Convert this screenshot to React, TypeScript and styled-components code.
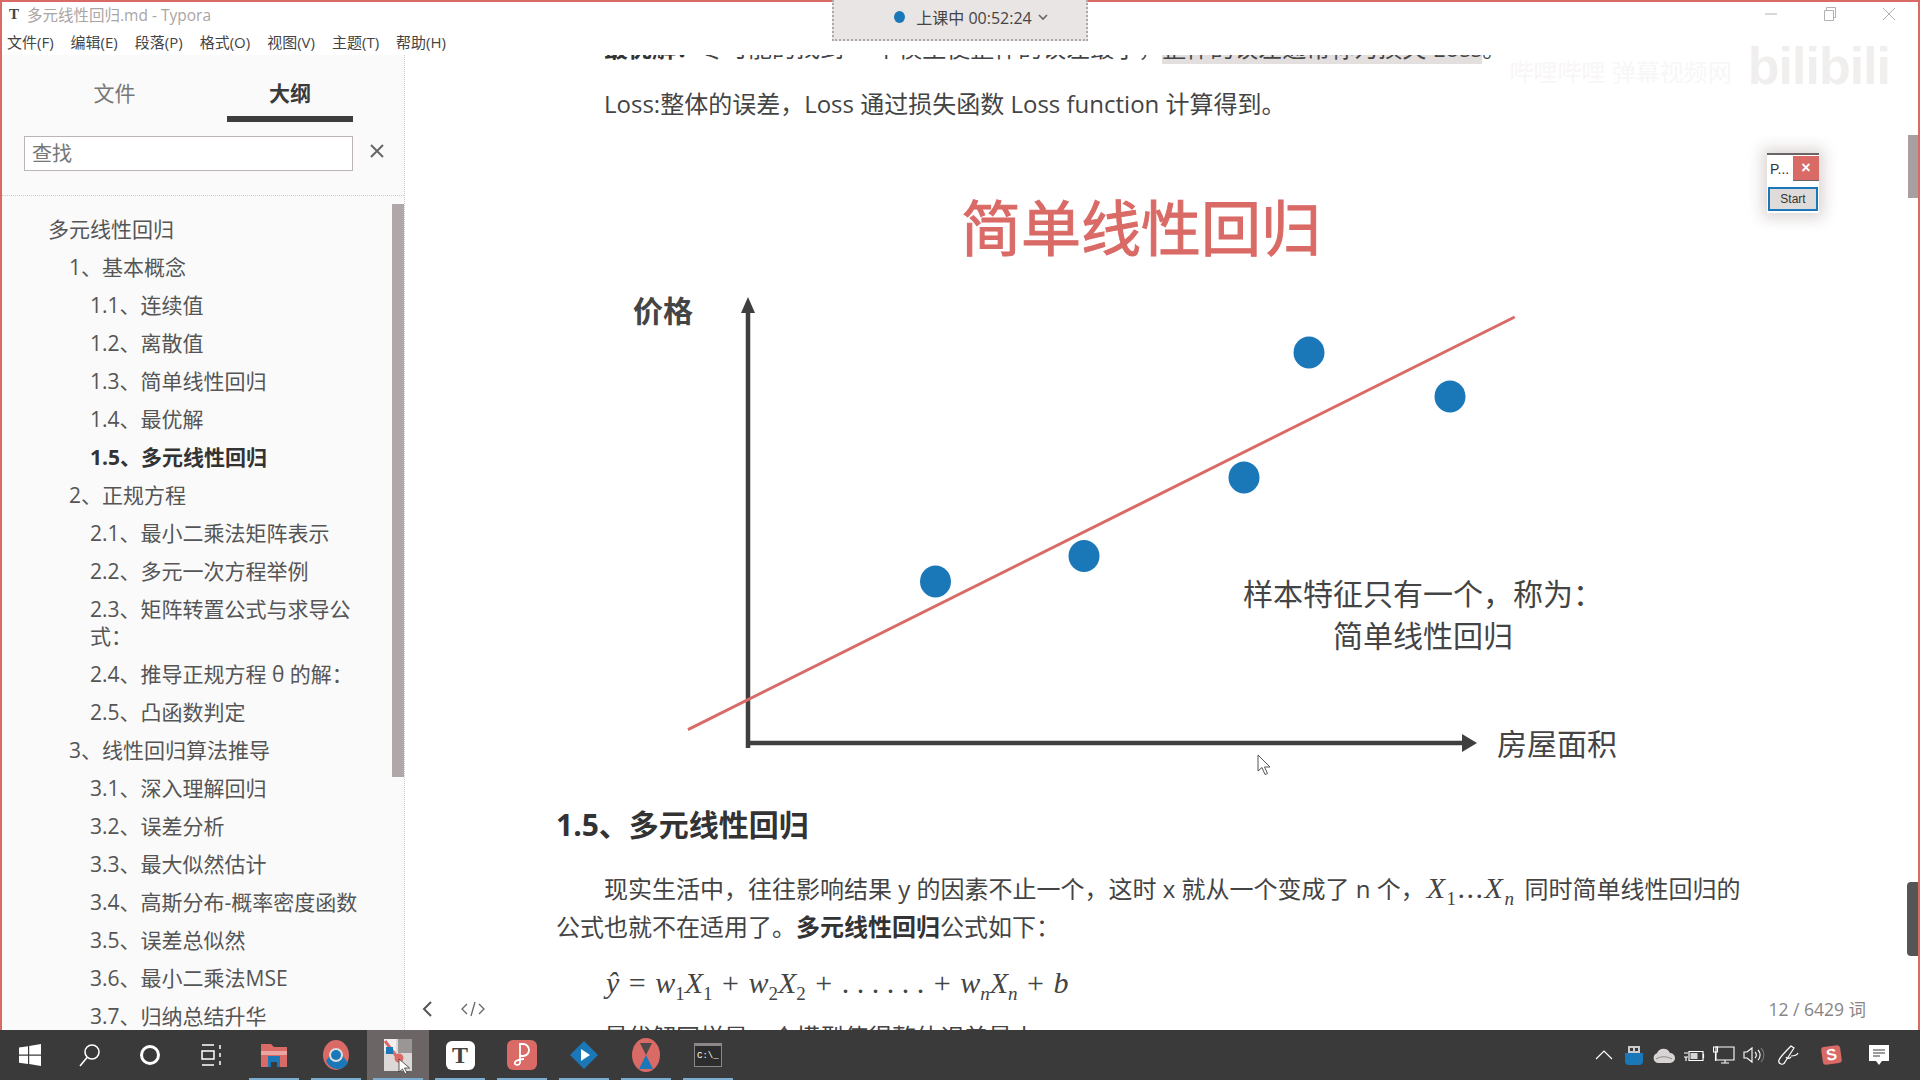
import styled, { createGlobalStyle } from 'styled-components';

const UI_FONT = '"Open Sans", "Noto Sans CJK SC", sans-serif';
const CJK_FONT = '"Noto Sans CJK SC", "Open Sans", sans-serif';
const RED = '#d96a66';
const BLUE = '#1a78b8';

const GlobalStyle = createGlobalStyle`
  html, body {
    margin: 0;
    padding: 0;
    width: 1920px;
    height: 1080px;
    overflow: hidden;
    background: #fff;
  }
  * { box-sizing: border-box; }
`;

const outline = [
  { level: 1, text: '多元线性回归' },
  { level: 2, text: '1、基本概念' },
  { level: 3, text: '1.1、连续值' },
  { level: 3, text: '1.2、离散值' },
  { level: 3, text: '1.3、简单线性回归' },
  { level: 3, text: '1.4、最优解' },
  { level: 3, text: '1.5、多元线性回归', active: true },
  { level: 2, text: '2、正规方程' },
  { level: 3, text: '2.1、最小二乘法矩阵表示' },
  { level: 3, text: '2.2、多元一次方程举例' },
  { level: 3, text: '2.3、矩阵转置公式与求导公式：' },
  { level: 3, text: '2.4、推导正规方程 θ 的解：' },
  { level: 3, text: '2.5、凸函数判定' },
  { level: 2, text: '3、线性回归算法推导' },
  { level: 3, text: '3.1、深入理解回归' },
  { level: 3, text: '3.2、误差分析' },
  { level: 3, text: '3.3、最大似然估计' },
  { level: 3, text: '3.4、高斯分布-概率密度函数' },
  { level: 3, text: '3.5、误差总似然' },
  { level: 3, text: '3.6、最小二乘法MSE' },
  { level: 3, text: '3.7、归纳总结升华' },
];

const menus = ['文件(F)', '编辑(E)', '段落(P)', '格式(O)', '视图(V)', '主题(T)', '帮助(H)'];

const dots = [
  [935.5, 580.5],
  [1084, 555],
  [1244, 476.5],
  [1309, 351.5],
  [1450, 395.5],
];

function App() {
  return (
    <>
      <GlobalStyle />
      <Screen>
        <Window>
          <TitleBar>
            <AppGlyph>T</AppGlyph>
            <TitleText>多元线性回归.md - Typora</TitleText>
            <WindowButtons>
              <WindowButton>
                <svg width="14" height="14" viewBox="0 0 14 14">
                  <path d="M1 7h12" stroke="#b5b0b0" strokeWidth="1" />
                </svg>
              </WindowButton>
              <WindowButton>
                <svg width="14" height="14" viewBox="0 0 14 14" fill="none" stroke="#b5b0b0">
                  <path d="M1.5 3.5h9v10h-9zM3.5 3.5v-3h9v10h-2" />
                </svg>
              </WindowButton>
              <WindowButton>
                <svg width="14" height="14" viewBox="0 0 14 14">
                  <path d="M1 1l12 12M13 1L1 13" stroke="#b5b0b0" strokeWidth="1" />
                </svg>
              </WindowButton>
            </WindowButtons>
          </TitleBar>

          <MenuBar>
            {menus.map((m) => (
              <MenuItem key={m}>{m}</MenuItem>
            ))}
          </MenuBar>

          <Body>
            <Sidebar>
              <Tabs>
                <Tab>文件</Tab>
                <Tab $active>大纲</Tab>
              </Tabs>
              <SearchRow>
                <SearchBox>查找</SearchBox>
                <svg width="16" height="16" viewBox="0 0 16 16">
                  <path d="M2 2l12 12M14 2L2 14" stroke="#666" strokeWidth="2" />
                </svg>
              </SearchRow>
              <OutlineWrap>
                <OutlineList>
                  {outline.map((o) => (
                    <OutlineRow key={o.text} $level={o.level} $active={o.active}>
                      {o.text}
                    </OutlineRow>
                  ))}
                </OutlineList>
                <SideScrollThumb />
              </OutlineWrap>
            </Sidebar>

            <Editor>
              <Doc>
                <CutLine>
                  <b>最优解：</b>尽可能的找到 一个模型使整体的误差最小，
                  <Mark>整体的误差通常称为损失 Loss</Mark>。
                </CutLine>
                <Para>Loss:整体的误差，Loss 通过损失函数 Loss function 计算得到。</Para>

                <ChartSvg viewBox="620 170 1040 600" width="1040" height="600">
                  <text
                    x="1141"
                    y="250"
                    textAnchor="middle"
                    fontSize="60"
                    fill={RED}
                    stroke={RED}
                    strokeWidth="1"
                    fontFamily={CJK_FONT}
                  >
                    简单线性回归
                  </text>
                  <text x="633" y="321" fontSize="30" fontWeight="700" fill="#444" fontFamily={CJK_FONT}>
                    价格
                  </text>
                  <path d="M748 747V306" stroke="#3f3f3f" strokeWidth="4.5" fill="none" />
                  <path d="M741 312l7-16 7 16z" fill="#3f3f3f" />
                  <path d="M746 742H1464" stroke="#3f3f3f" strokeWidth="4.5" fill="none" />
                  <path d="M1462 733l15 9-15 9z" fill="#3f3f3f" />
                  <path d="M688 728.6L1514.7 316" stroke={RED} strokeWidth="3" fill="none" />
                  {dots.map(([x, y]) => (
                    <ellipse key={x} cx={x} cy={y} rx="15.5" ry="16" fill={BLUE} />
                  ))}
                  <text x="1243" y="604" fontSize="30" fill="#444" fontFamily={CJK_FONT}>
                    样本特征只有一个，称为：
                  </text>
                  <text x="1333" y="646" fontSize="30" fill="#444" fontFamily={CJK_FONT}>
                    简单线性回归
                  </text>
                  <text x="1497" y="754" fontSize="30" fill="#444" fontFamily={CJK_FONT}>
                    房屋面积
                  </text>
                </ChartSvg>

                <Heading>1.5、多元线性回归</Heading>
                <Para>
                  现实生活中，往往影响结果 y 的因素不止一个，这时 x 就从一个变成了 n 个，
                  <MathInline>
                    X<Sub>1</Sub>
                    <Plain>...</Plain>X<Sub $variable>n</Sub>
                  </MathInline>{' '}
                  同时简单线性回归的公式也就不在适用了。<b>多元线性回归</b>公式如下：
                </Para>
                <Formula>
                  ŷ <Op>=</Op> w<Sub>1</Sub>X<Sub>1</Sub> <Op>+</Op> w<Sub>2</Sub>X<Sub>2</Sub> <Op>+</Op>{' '}
                  <Plain>. . . . . .</Plain> <Op>+</Op> w<Sub $variable>n</Sub>X<Sub $variable>n</Sub> <Op>+</Op> b
                </Formula>
                <Para>最优解同样是一个模型使得整体误差最小</Para>
              </Doc>

              <FooterLeft>
                <svg width="12" height="18" viewBox="0 0 12 18" fill="none" stroke="#555" strokeWidth="2">
                  <path d="M10 2L3 9l7 7" />
                </svg>
                <svg width="24" height="16" viewBox="0 0 24 16" fill="none" stroke="#666" strokeWidth="1.3">
                  <path d="M6 3L1 8l5 5M18 3l5 5-5 5M14 1l-4 14" />
                </svg>
              </FooterLeft>
              <WordCount>12 / 6429 词</WordCount>
            </Editor>
          </Body>

          <RecordPill>
            <RecordDot />
            上课中 00:52:24
            <svg width="10" height="8" viewBox="0 0 10 8" fill="none" stroke="#666" strokeWidth="1.6">
              <path d="M1 2l4 4 4-4" />
            </svg>
          </RecordPill>

          <Watermark>
            <WatermarkNote>哔哩哔哩 弹幕视频网</WatermarkNote>
            <WatermarkLogo>bilibili</WatermarkLogo>
          </Watermark>

          <MiniPanel>
            <MiniHead>
              <MiniTitle>P...</MiniTitle>
              <MiniClose>×</MiniClose>
            </MiniHead>
            <MiniStart>Start</MiniStart>
          </MiniPanel>

          <EdgeThumb />
          <EdgeWidget />
          <PageCursor width="16" height="22" viewBox="0 0 16 22">
            <path d="M1 1v16l4-3.5 3 7 2.5-1-3-6.5H13z" fill="#fff" stroke="#555" strokeWidth="1" />
          </PageCursor>
        </Window>

        <Taskbar>
          <TaskSlot $w={60}>
            <svg width="22" height="22" viewBox="0 0 22 22" fill="#fff">
              <path d="M0 3.5l9-1.3v8.3H0zM10.2 2L22 0v10.5H10.2zM0 11.7h9V20L0 18.7zM10.2 11.7H22V22l-11.8-2z" />
            </svg>
          </TaskSlot>
          <TaskSlot $w={60}>
            <svg width="22" height="24" viewBox="0 0 22 24" fill="none" stroke="#fff" strokeWidth="1.6">
              <circle cx="13" cy="9" r="7" />
              <path d="M8 14.5L1 23" />
            </svg>
          </TaskSlot>
          <TaskSlot $w={60}>
            <svg width="22" height="22" viewBox="0 0 22 22" fill="none" stroke="#fff" strokeWidth="3">
              <circle cx="11" cy="11" r="8.5" />
            </svg>
          </TaskSlot>
          <TaskSlot $w={63}>
            <svg width="22" height="22" viewBox="0 0 22 22" fill="none" stroke="#fff" strokeWidth="1.5">
              <path d="M1 1h12M1 21h12M1 7h12v8H1zM19 1v4M19 9v4M19 17v4" />
            </svg>
          </TaskSlot>

          <TaskApp $open>
            <svg width="28" height="28" viewBox="0 0 28 28">
              <path d="M1 3h10l3 3h13v20H1z" fill={RED} />
              <path d="M1 10h26v4H1z" fill="#e8a5a2" />
              <path d="M8 15h12v11H8z" fill={BLUE} />
              <path d="M11 21h6v5h-6z" fill="#3a3a3a" />
            </svg>
          </TaskApp>
          <TaskApp $open>
            <svg width="28" height="32" viewBox="0 0 28 32">
              <ellipse cx="14" cy="16" rx="13" ry="15" fill={RED} />
              <path d="M4 22a13 15 0 0 0 22 2l-6-8H8z" fill={BLUE} />
              <circle cx="14" cy="16" r="7" fill="#ddd" />
              <circle cx="14" cy="16" r="5" fill={BLUE} />
            </svg>
          </TaskApp>
          <TaskApp $open $active>
            <svg width="32" height="36" viewBox="0 0 32 36">
              <path d="M2 2h28v32H2z" fill="#ddd8d8" />
              <path d="M16 2h14v14H16z" fill="#9a9696" />
              <path d="M2 2h12v12H2z" fill="#f2f0f0" />
              <path d="M3 4l12 16" stroke={RED} strokeWidth="3" />
              <path d="M4 10h7v7H4z" fill={BLUE} />
              <circle cx="17" cy="21" r="4.5" fill={RED} />
              <path d="M17 22v13l3.5-3 2.5 5 2-1-2.5-5h5z" fill="#fff" stroke="#333" strokeWidth="0.8" />
            </svg>
          </TaskApp>
          <TaskApp $open>
            <TyporaTile>T</TyporaTile>
          </TaskApp>
          <TaskApp $open>
            <PdfTile>
              <svg width="20" height="28" viewBox="0 0 20 28" fill="none" stroke="#fff" strokeWidth="1.8">
                <path d="M8 3h3a6 6 0 0 1 0 12H8zM8 3v19a3 3 0 0 1-5 1c-1-2 2-5 9-5" />
              </svg>
            </PdfTile>
          </TaskApp>
          <TaskApp $open>
            <svg width="30" height="30" viewBox="0 0 30 30">
              <path d="M15 1l14 14-14 14L1 15z" fill={BLUE} />
              <path d="M12 9l9 6-9 6z" fill="#fff" />
            </svg>
          </TaskApp>
          <TaskApp $open>
            <svg width="30" height="36" viewBox="0 0 30 36">
              <ellipse cx="15" cy="18" rx="14" ry="17" fill={RED} />
              <path d="M9 6h12l-6 12z" fill="#4a4a4a" />
              <path d="M15 18l7 14H8z" fill={BLUE} />
            </svg>
          </TaskApp>
          <TaskApp $open>
            <TerminalTile>C:\_</TerminalTile>
          </TaskApp>

          <Tray>
            <TraySlot $w={30}>
              <svg width="18" height="10" viewBox="0 0 18 10" fill="none" stroke="#fff" strokeWidth="1.2">
                <path d="M1 9l8-8 8 8" />
              </svg>
            </TraySlot>
            <TraySlot $w={30}>
              <svg width="18" height="20" viewBox="0 0 18 20">
                <path d="M3 1h12v7H3z" fill="#ccc" />
                <path d="M5 3h3v3H5zM10 3h3v3h-3z" fill="#3a3a3a" />
                <path d="M0 8h18v8a4 4 0 0 1-4 4H4a4 4 0 0 1-4-4z" fill={BLUE} />
              </svg>
            </TraySlot>
            <TraySlot $w={30}>
              <svg width="22" height="15" viewBox="0 0 22 15">
                <path d="M5 15a5 5 0 0 1-1-9.7A7 7 0 0 1 17 5a5 5 0 0 1 0 10z" fill="#d8d4d4" />
                <path d="M3 11c5-3 10-3 16 0" stroke="#8c8888" fill="none" />
              </svg>
            </TraySlot>
            <TraySlot $w={30}>
              <svg width="22" height="14" viewBox="0 0 22 14" fill="none" stroke="#fff">
                <path d="M6 3.5h14v9H6zM20.5 6v4" strokeWidth="1.2" />
                <path d="M7.5 5h7v6h-7z" fill="#d8d4d4" stroke="none" />
                <path d="M1 5h4M1 9h4M3 9v4" strokeWidth="1.2" />
              </svg>
            </TraySlot>
            <TraySlot $w={30}>
              <svg width="22" height="18" viewBox="0 0 22 18" fill="none" stroke="#fff" strokeWidth="1.1">
                <path d="M3 1h18v13H3zM12 14v3M8 17h8" />
                <path d="M0.5 1h4v5h-4zM2.5 6v9" />
              </svg>
            </TraySlot>
            <TraySlot $w={30}>
              <svg width="22" height="18" viewBox="0 0 22 18" fill="none" stroke="#fff" strokeWidth="1.1">
                <path d="M1 6h3l5-4v14l-5-4H1z" />
                <path d="M12 6a4 4 0 0 1 0 6M15 4a7 7 0 0 1 0 10" />
                <path d="M18 2a10 10 0 0 1 0 14" stroke="#777" />
              </svg>
            </TraySlot>
            <TraySlot $w={38}>
              <svg width="22" height="22" viewBox="0 0 22 22" fill="none" stroke="#fff" strokeWidth="1.2">
                <path d="M14 2l3 2-9 14a3 3 0 0 1-6-2c1-3 5-7 12-14zM14 12c3 0 6-1 7-3M9 13c1 2 3 2 5 0" />
              </svg>
            </TraySlot>
            <TraySlot $w={48}>
              <SogouTile>S</SogouTile>
            </TraySlot>
            <TraySlot $w={48}>
              <svg width="20" height="20" viewBox="0 0 20 20">
                <path d="M0 0h20v16h-7l-3 4-3-4H0z" fill="#fff" />
                <path d="M4 5h12M4 8h12M4 11h7" stroke="#3a3a3a" />
              </svg>
            </TraySlot>
          </Tray>
        </Taskbar>
      </Screen>
    </>
  );
}

export default App;

const Screen = styled.div`
  width: 1920px;
  height: 1080px;
  display: flex;
  flex-direction: column;
  overflow: hidden;
  font-family: ${UI_FONT};
`;

const Window = styled.div`
  position: relative;
  height: 1030px;
  display: flex;
  flex-direction: column;
  background: #fff;
  border: 2px solid ${RED};
  border-bottom: none;
`;

const TitleBar = styled.div`
  height: 24px;
  flex: none;
  display: flex;
  align-items: center;
  padding-left: 4px;
`;

const AppGlyph = styled.span`
  width: 16px;
  font: 700 15px 'Liberation Serif', serif;
  color: #444;
  text-align: center;
`;

const TitleText = styled.span`
  margin-left: 5px;
  font-size: 15.5px;
  color: #aaa5a5;
`;

const WindowButtons = styled.div`
  margin-left: auto;
  display: flex;
  align-items: center;
`;

const WindowButton = styled.div`
  width: 59px;
  display: flex;
  justify-content: center;
`;

const MenuBar = styled.div`
  height: 29px;
  flex: none;
  display: flex;
  align-items: center;
  gap: 17px;
  padding: 2px 0 0 5px;
`;

const MenuItem = styled.span`
  font-size: 15px;
  color: #444;
`;

const Body = styled.div`
  flex: 1;
  min-height: 0;
  display: flex;
`;

const Sidebar = styled.aside`
  width: 403px;
  flex: none;
  display: flex;
  flex-direction: column;
  background: #fafafa;
  border-right: 1px dotted #d0cccc;
`;

const Tabs = styled.div`
  display: grid;
  grid-template-columns: 225px 126px;
  height: 67px;
  flex: none;
`;

const Tab = styled.div<{ $active?: boolean }>`
  display: flex;
  align-items: center;
  justify-content: center;
  padding-top: 12px;
  font-size: 21px;
  font-weight: ${(p) => (p.$active ? 700 : 400)};
  color: ${(p) => (p.$active ? '#3a3a3a' : '#777')};
  border-bottom: ${(p) => (p.$active ? '6px solid #3d3d3d' : '6px solid transparent')};
`;

const SearchRow = styled.div`
  height: 74px;
  flex: none;
  display: flex;
  align-items: flex-start;
  gap: 16px;
  padding: 14px 0 0 22px;
  border-bottom: 1px dotted #d0cccc;

  svg {
    margin-top: 7px;
  }
`;

const SearchBox = styled.div`
  width: 329px;
  height: 35px;
  padding-left: 7px;
  background: #fff;
  border: 1px solid #bdb5b5;
  font-size: 20px;
  line-height: 33px;
  color: #777;
`;

const OutlineWrap = styled.div`
  position: relative;
  flex: 1;
  min-height: 0;
  overflow: hidden;
`;

const OutlineList = styled.div`
  padding: 14px 36px 0 0;
`;

const OutlineRow = styled.div<{ $level: number; $active?: boolean }>`
  padding: 5.5px 0 5.5px ${(p) => 46 + (p.$level - 1) * 21}px;
  font-size: 21px;
  line-height: 27px;
  color: ${(p) => (p.$active ? '#333' : '#555')};
  font-weight: ${(p) => (p.$active ? 700 : 400)};
`;

const SideScrollThumb = styled.div`
  position: absolute;
  top: 8px;
  right: 0;
  width: 12px;
  height: 573px;
  background: #b0a8a8;
`;

const Editor = styled.main`
  position: relative;
  flex: 1;
  min-width: 0;
  overflow: hidden;
`;

const Doc = styled.div`
  padding-left: 151px;
  margin-top: -26px;
  width: 1339px;
  color: #444;
  font-size: 24px;
  line-height: 38px;

  b {
    color: #333;
  }
`;

const Para = styled.p`
  margin: 0 0 18px;
  text-indent: 48px;
`;

const CutLine = styled(Para)`
  margin-bottom: 18px;
`;

const Mark = styled.span`
  background: #e4dfdf;
`;

const ChartSvg = styled.svg`
  display: block;
  margin: 48px 0 0 64px;
`;

const Heading = styled.h2`
  margin: 34px 0 24px;
  font-size: 30px;
  line-height: 40px;
  font-weight: 700;
  color: #333;
`;

const MathInline = styled.span`
  margin: 0 3px 0 2px;
  font-family: 'Liberation Serif', serif;
  font-style: italic;
  font-size: 30px;
  letter-spacing: 1.5px;
`;

const Sub = styled.sub<{ $variable?: boolean }>`
  font-size: 19px;
  line-height: 0;
  font-style: ${(p) => (p.$variable ? 'italic' : 'normal')};
`;

const Plain = styled.span`
  font-style: normal;
`;

const Formula = styled.div`
  margin: 0 0 16px 50px;
  font-family: 'Liberation Serif', serif;
  font-style: italic;
  font-size: 30px;
  color: #444;
`;

const Op = styled.span`
  font-style: normal;
  margin: 0 2px;
`;

const FooterLeft = styled.div`
  position: absolute;
  left: 16px;
  bottom: 12px;
  display: flex;
  align-items: center;
  gap: 28px;
`;

const WordCount = styled.div`
  position: absolute;
  right: 52px;
  bottom: 8px;
  font-size: 17.5px;
  line-height: 26px;
  color: #8a8585;
  background: #fff;
`;

const RecordPill = styled.div`
  position: absolute;
  top: -2px;
  left: 830px;
  width: 256px;
  height: 41px;
  padding: 0 0 5px 22px;
  display: flex;
  align-items: center;
  justify-content: center;
  gap: 6px;
  font-size: 16px;
  color: #444;
  background: #e9e5e5;
  border: 2px dotted #b0a8a8;
  border-top: none;
`;

const RecordDot = styled.span`
  width: 11px;
  height: 12px;
  margin-right: 5px;
  border-radius: 50%;
  background: ${BLUE};
`;

const Watermark = styled.div`
  position: absolute;
  top: 34px;
  right: 28px;
  display: flex;
  align-items: center;
  gap: 16px;
`;

const WatermarkNote = styled.span`
  padding-top: 8px;
  font-size: 24px;
  color: #f8f6f6;
`;

const WatermarkLogo = styled.span`
  font-family: 'Liberation Sans', sans-serif;
  font-weight: 700;
  font-size: 52px;
  color: #f1eeee;
  letter-spacing: -1px;
`;

const MiniPanel = styled.div`
  position: absolute;
  top: 151px;
  left: 1765px;
  width: 52px;
  height: 60px;
  background: #fff;
  border-top: 2px solid #6b6464;
  box-shadow: 0 0 14px 5px #ddd6d6;
`;

const MiniHead = styled.div`
  display: flex;
  height: 29px;
  padding-top: 1px;
  justify-content: space-between;
`;

const MiniTitle = styled.span`
  padding: 2px 0 0 3px;
  font: 14px/22px 'Liberation Sans', sans-serif;
  color: #333;
`;

const MiniClose = styled.span`
  width: 26px;
  height: 25px;
  text-align: center;
  font: 700 16px/23px 'Liberation Sans', sans-serif;
  color: #fff;
  background: ${RED};
  border-bottom: 1px solid #6b6464;
`;

const MiniStart = styled.div`
  margin: 3px 1px 0;
  height: 24px;
  text-align: center;
  font: 12px/20px 'Liberation Sans', sans-serif;
  color: #333;
  background: #e0dbdb;
  border: 2px solid ${BLUE};
`;

const EdgeThumb = styled.div`
  position: absolute;
  top: 133px;
  right: 0;
  width: 10px;
  height: 63px;
  background: #a8a0a0;
`;

const EdgeWidget = styled.div`
  position: absolute;
  top: 880px;
  right: 0;
  width: 11px;
  height: 74px;
  border-radius: 4px 0 0 4px;
  background: #555;
`;

const PageCursor = styled.svg`
  position: absolute;
  top: 752px;
  left: 1255px;
`;

const Taskbar = styled.footer`
  flex: 1;
  display: flex;
  align-items: stretch;
  background: #3a3a3a;
`;

const TaskSlot = styled.div<{ $w: number }>`
  width: ${(p) => p.$w}px;
  display: flex;
  align-items: center;
  justify-content: center;
`;

const TaskApp = styled.div<{ $open?: boolean; $active?: boolean }>`
  position: relative;
  width: 62px;
  display: flex;
  align-items: center;
  justify-content: center;
  background: ${(p) => (p.$active ? '#6b6565' : 'transparent')};

  &::after {
    content: '';
    position: absolute;
    left: 6px;
    right: 6px;
    bottom: 0;
    height: 2px;
    background: ${(p) => (p.$open ? '#7aaed0' : 'transparent')};
  }
`;

const TyporaTile = styled.div`
  width: 29px;
  height: 29px;
  border-radius: 6px;
  text-align: center;
  font: 700 24px/29px 'Liberation Serif', serif;
  color: #444;
  background: #fff;
`;

const PdfTile = styled.div`
  width: 30px;
  height: 30px;
  display: flex;
  align-items: center;
  justify-content: center;
  border-radius: 6px;
  background: ${RED};
`;

const TerminalTile = styled.div`
  width: 28px;
  height: 24px;
  padding: 3px 0 0 2px;
  font: 9px/14px 'Liberation Mono', monospace;
  color: #fff;
  background: #2d2d2d;
  border: 1px solid #8c8888;
  border-top-width: 3px;
`;

const Tray = styled.div`
  margin-left: auto;
  padding-right: 17px;
  display: flex;
`;

const TraySlot = styled.div<{ $w: number }>`
  width: ${(p) => p.$w}px;
  display: flex;
  align-items: center;
  justify-content: center;
`;

const SogouTile = styled.div`
  width: 19px;
  height: 18px;
  transform: rotate(-8deg);
  border-radius: 3px;
  text-align: center;
  font: 700 16px/18px 'Liberation Sans', sans-serif;
  color: #fff;
  background: ${RED};
`;
